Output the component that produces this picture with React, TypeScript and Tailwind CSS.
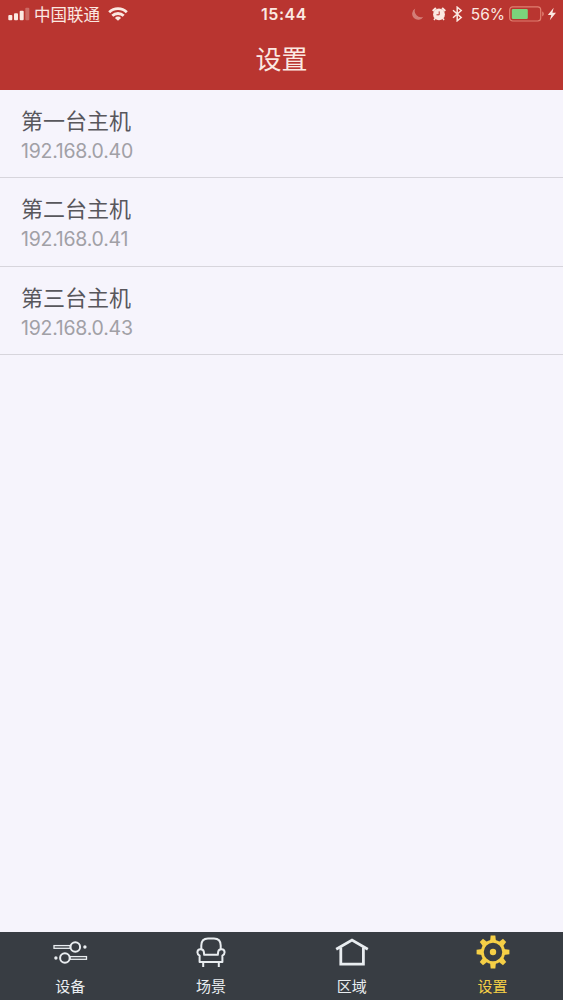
import React from "react";

type Host = {
  name: string;
  ip: string;
};

type TabItemProps = {
  label: string;
  icon: React.ReactNode;
  active?: boolean;
};

const hosts: Host[] = [
  { name: "第一台主机", ip: "192.168.0.40" },
  { name: "第二台主机", ip: "192.168.0.41" },
  { name: "第三台主机", ip: "192.168.0.43" },
];

function SignalIcon() {
  return (
    <svg width="22" height="14" viewBox="0 0 22 14" fill="currentColor">
      <rect x="0.3" y="8" width="4" height="5.2" rx="1" />
      <rect x="6" y="6.2" width="4" height="7" rx="1" />
      <rect x="11.7" y="3.7" width="4" height="9.5" rx="1" />
      <rect x="17.3" y="0.8" width="4" height="12.4" rx="1" opacity="0.3" />
    </svg>
  );
}

function WifiIcon() {
  return (
    <svg width="20" height="14" viewBox="0 0 20 14" fill="none" stroke="currentColor" strokeWidth="2.8">
      <path d="M1.2 5.2a12.6 12.6 0 0 1 17.6 0" />
      <path d="M4.3 8.8a8.2 8.2 0 0 1 11.4 0" />
      <path d="M10 13.8L6.9 10.9a4.4 4.4 0 0 1 6.2 0Z" fill="currentColor" stroke="none" />
    </svg>
  );
}

function MoonIcon() {
  return (
    <svg width="13" height="13" viewBox="0 0 13 13" fill="currentColor" className="opacity-40">
      <path d="M4.3 0.5A6 6 0 1 0 12.4 8.7A6.2 6.2 0 0 1 4.3 0.5Z" />
    </svg>
  );
}

function AlarmIcon() {
  return (
    <svg width="14" height="14" viewBox="0 0 14 14">
      <circle cx="7" cy="7.4" r="5.9" fill="currentColor" />
      <path d="M0.7 4.1L3.9 1.1M13.3 4.1L10.1 1.1" stroke="currentColor" strokeWidth="2" />
      <path d="M3 11.5L2 13M11 11.5L12 13" stroke="currentColor" strokeWidth="1.5" />
      <path d="M7.2 4.4V7.8H4.5" fill="none" stroke="#b93530" strokeWidth="1" />
    </svg>
  );
}

function BluetoothIcon() {
  return (
    <svg width="11" height="16" viewBox="0 0 11 16" fill="none" stroke="currentColor" strokeWidth="1.5">
      <path d="M1 4.3L9.2 11.5L5.2 14.8V1.2L9.2 4.5L1 11.7" />
    </svg>
  );
}

function BatteryIcon() {
  return (
    <svg width="36" height="16" viewBox="0 0 36 16">
      <rect x="0.7" y="0.8" width="31" height="14.2" rx="3" fill="none" stroke="#e07f70" strokeWidth="1.2" />
      <rect x="2.8" y="2.9" width="16" height="10" rx="1.2" fill="#7bd37b" />
      <path d="M33.2 5.2q3.4 2.7 0 5.4Z" fill="#e07f70" />
    </svg>
  );
}

function BoltIcon() {
  return (
    <svg width="10" height="14" viewBox="0 0 10 14" fill="currentColor">
      <path d="M6.7 0.8L0.8 7.9H4.3L2.8 13.2L9 5.8H5.4Z" />
    </svg>
  );
}

function DevicesIcon() {
  return (
    <svg width="36" height="36" viewBox="0 0 36 36" fill="none" stroke="currentColor">
      <rect x="2" y="11.6" width="16.3" height="2.7" strokeWidth="1.3" />
      <circle cx="23.3" cy="13" r="4.8" strokeWidth="2" />
      <circle cx="32.9" cy="13" r="1.7" fill="currentColor" stroke="none" />
      <circle cx="3.9" cy="24" r="1.7" fill="currentColor" stroke="none" />
      <circle cx="12.9" cy="24" r="4.8" strokeWidth="2" />
      <rect x="18" y="22.6" width="16.5" height="2.7" strokeWidth="1.3" />
    </svg>
  );
}

function ArmchairIcon() {
  return (
    <svg width="36" height="36" viewBox="0 0 36 36" fill="none" stroke="currentColor" strokeWidth="2" strokeLinejoin="round">
      <path d="M8.3 15.2V11.5Q8.3 4.4 15 4.4H21Q27.7 4.4 27.7 11.5V15.2" />
      <path d="M11.2 20.8L10.8 17.6C10.2 14.6 4.6 14.2 4.4 18.2C4.4 20 5.2 20.8 6.6 21.6V28H29.4V21.6C30.8 20.8 31.6 20 31.6 18.2C31.4 14.2 25.8 14.6 25.2 17.6L24.8 20.8Z" />
      <path d="M10.2 28V33M25.8 28V33" />
    </svg>
  );
}

function HouseIcon() {
  return (
    <svg width="36" height="36" viewBox="0 0 36 36" fill="none" stroke="currentColor" strokeWidth="2.8">
      <path d="M2.2 15.3L18 6.1L33.8 15.3" />
      <path d="M6.8 13.5V30.2H29.4V13.5" />
    </svg>
  );
}

function GearIcon() {
  return (
    <svg width="36" height="36" viewBox="0 0 36 36" fill="currentColor">
      {[0, 45, 90, 135, 180, 225, 270, 315].map((angle) => (
        <path key={angle} d="M15 7.4L15.7 1.6H20.3L21 7.4Z" transform={`rotate(${angle} 18 18)`} />
      ))}
      <circle cx="18" cy="18" r="10.7" fill="none" stroke="currentColor" strokeWidth="2.9" />
      <circle cx="18" cy="18" r="3.2" />
    </svg>
  );
}

function StatusBar() {
  return (
    <div className="grid h-7 grid-cols-[1fr_auto_1fr] items-center pl-2 pr-1.5">
      <div className="flex items-center">
        <SignalIcon />
        <span className="ml-1 text-[16.5px] leading-[26px]">中国联通</span>
        <span className="ml-2">
          <WifiIcon />
        </span>
      </div>
      <span className="pl-[3px] font-[Inter,sans-serif] text-base font-semibold tracking-[0.6px]">15:44</span>
      <div className="flex items-center justify-end">
        <MoonIcon />
        <span className="ml-2">
          <AlarmIcon />
        </span>
        <span className="ml-1.5 mr-px">
          <BluetoothIcon />
        </span>
        <span className="ml-[7px] pt-0.5 font-[Inter,sans-serif] text-[15.5px]">56%</span>
        <span className="ml-1">
          <BatteryIcon />
        </span>
        <span className="ml-0.5">
          <BoltIcon />
        </span>
      </div>
    </div>
  );
}

function HostRow({ name, ip }: Host) {
  return (
    <li className="h-[88.3px] border-b border-[#d7d5dc] pl-[21px] pt-3.5">
      <div className="text-[22px] leading-[31px] text-[#58575c]">{name}</div>
      <div className="pt-px font-[Inter,sans-serif] text-[19.5px] leading-[31px] tracking-[-0.25px] text-[#a1a0a6]">
        {ip}
      </div>
    </li>
  );
}

function TabItem({ label, icon, active = false }: TabItemProps) {
  return (
    <button
      type="button"
      className={`flex flex-1 flex-col items-center pt-0.5 ${active ? "text-[#f5cf46]" : "text-[#e9edf0]"}`}
    >
      {icon}
      <span className="mt-1.5 text-[15px] leading-5">{label}</span>
    </button>
  );
}

export default function App() {
  return (
    <div className="flex h-screen w-full flex-col bg-[#f6f4fc] font-['Noto_Sans_CJK_SC',sans-serif]">
      <header className="h-[90px] shrink-0 bg-[#b93530] text-[#fbe9e2]">
        <StatusBar />
        <h1 className="text-center text-[26px] leading-[60px]">设置</h1>
      </header>

      <ul className="flex-1">
        {hosts.map((host) => (
          <HostRow key={host.ip} {...host} />
        ))}
      </ul>

      <nav className="flex h-[68px] shrink-0 bg-[#383d43]">
        <TabItem label="设备" icon={<DevicesIcon />} />
        <TabItem label="场景" icon={<ArmchairIcon />} />
        <TabItem label="区域" icon={<HouseIcon />} />
        <TabItem label="设置" icon={<GearIcon />} active />
      </nav>
    </div>
  );
}
